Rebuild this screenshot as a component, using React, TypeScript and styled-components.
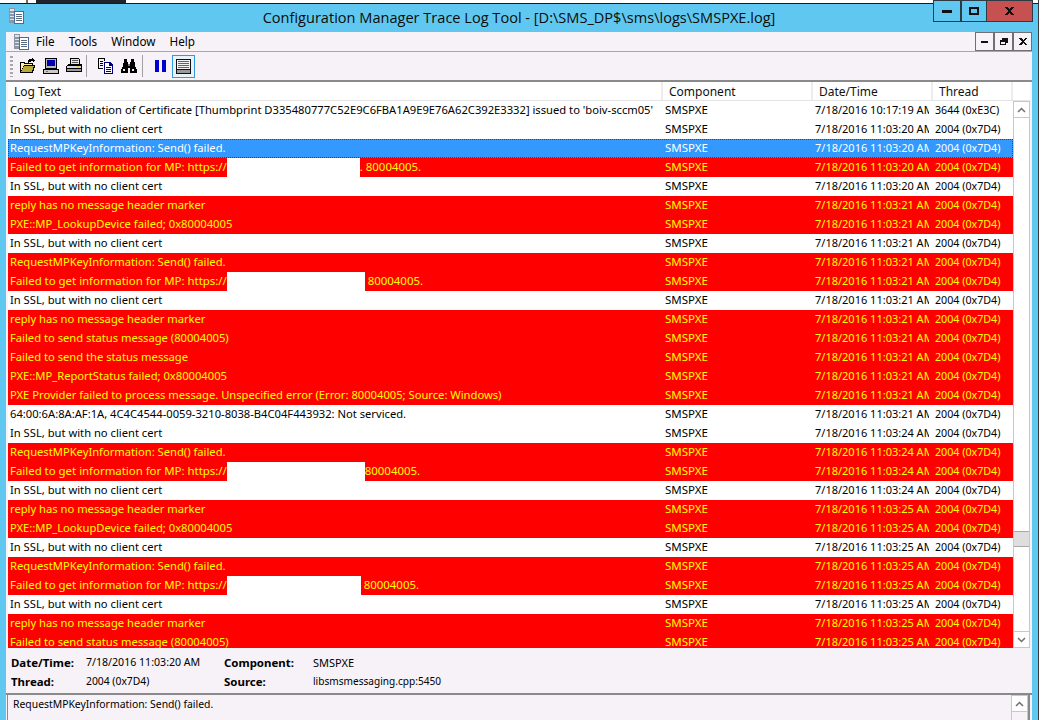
import React from "react";
import styled, { createGlobalStyle } from "styled-components";

const GlobalStyle = createGlobalStyle`
  html, body {
    margin: 0;
    padding: 0;
    background: #ffffff;
    overflow: hidden;
  }
  body {
    font-family: "Noto Sans", "Open Sans", sans-serif;
    font-size: 12px;
    color: #000000;
  }
`;

const BLUE = "#60c8f0";
const PANEL = "#f6f2f7";

const Page = styled.div`
  width: 1042px;
  height: 720px;
  overflow: hidden;
`;

const Frame = styled.div`
  width: 1038px;
  height: 720px;
  background: ${BLUE};
  border-right: 1px solid #3a3a3a;
  display: flex;
  flex-direction: column;
`;

const TitleBar = styled.div`
  position: relative;
  height: 32px;
  flex: none;
  display: grid;
  grid-template-columns: 1fr auto 1fr;
`;

const BehindStrip = styled.svg`
  position: absolute;
  left: 0;
  top: 0;
`;

const TitleLeft = styled.div`
  padding: 8px 0 0 8px;
`;

const TitleText = styled.div`
  padding-top: 6px;
  font-family: "Open Sans", sans-serif;
  font-size: 14.57px;
  line-height: 22px;
  color: #0c0c0c;
`;

const TitleRight = styled.div`
  position: relative;
  display: flex;
  justify-content: flex-end;
  align-items: flex-start;
  padding-right: 5px;
`;

const CaptionButton = styled.div<{ $w: number; $close?: boolean }>`
  width: ${({ $w }) => $w}px;
  height: 22px;
  box-sizing: border-box;
  background: ${({ $close }) => ($close ? "#c75050" : BLUE)};
  border: 1px solid #2c3b44;
  border-left-width: ${({ $close }) => ($close ? 0 : 1)}px;
  display: flex;
  align-items: center;
  justify-content: center;
`;

const Mdi = styled.div`
  flex: 1;
  min-height: 0;
  margin: 0 6px 0 6px;
  background: ${PANEL};
  display: flex;
  flex-direction: column;
`;

const MenuBar = styled.div`
  height: 20px;
  flex: none;
  display: flex;
  align-items: center;
  box-sizing: border-box;
  padding-left: 7px;
  border-bottom: 1px solid #a8a8a8;
`;

const MenuItems = styled.div`
  display: flex;
  gap: 14px;
  margin-left: 7px;
  font-size: 11.7px;
  line-height: 18px;
  padding-bottom: 1px;
  flex: 1;
`;

const MdiButtons = styled.div`
  display: flex;
  align-self: flex-start;
`;

const MdiButton = styled.div`
  width: 19px;
  height: 19px;
  box-sizing: border-box;
  border: 1px solid #707070;
  display: flex;
  align-items: center;
  justify-content: center;
`;

const Toolbar = styled.div`
  height: 30px;
  flex: none;
  box-sizing: border-box;
  border-bottom: 2px solid #8a8a8a;
  display: flex;
  align-items: center;
  padding-left: 4px;
`;

const Gripper = styled.div`
  width: 3px;
  height: 21px;
  margin-right: 3px;
  background: repeating-linear-gradient(to bottom, #a8a8a8 0 2px, transparent 2px 4px);
`;

const ToolButton = styled.div<{ $on?: boolean }>`
  width: 23px;
  height: 23px;
  box-sizing: border-box;
  display: flex;
  align-items: center;
  justify-content: center;
  border: ${({ $on }) => ($on ? "1px solid #3399dd" : "none")};
  background: ${({ $on }) => ($on ? "#e8f2fa" : "transparent")};
`;

const ToolSeparator = styled.div<{ $left: number; $right: number }>`
  width: 1px;
  height: 22px;
  margin: 0 ${({ $right }) => $right}px 0 ${({ $left }) => $left}px;
  background: #a0a0a0;
`;

const ListArea = styled.div`
  position: relative;
  height: 566px;
  flex: none;
  margin-left: 2px;
  margin-right: 2px;
  background: #ffffff;
  display: flex;
  overflow: hidden;
`;

const ListMain = styled.div`
  width: 1005px;
  flex: none;
  display: flex;
  flex-direction: column;
`;

const columns = "655px 150px 120px 80px";

const HeaderRow = styled.div`
  height: 19px;
  flex: none;
  width: 1022px;
  display: grid;
  grid-template-columns: ${columns} 1fr;
  border-bottom: 1px solid #e4e4e4;
  box-sizing: border-box;
`;

const HeaderCell = styled.div`
  padding: 1px 0 0 6px;
  line-height: 17px;
  border-right: 2px solid #ececec;
  color: #111111;
`;

const Row = styled.div<{ $kind: RowKind }>`
  height: 19px;
  flex: none;
  box-sizing: border-box;
  display: grid;
  grid-template-columns: ${columns};
  line-height: 18px;
  white-space: nowrap;
  background: ${({ $kind }) =>
    $kind === "error" ? "#ff0000" : $kind === "selected" ? "#3399ff" : "#ffffff"};
  color: ${({ $kind }) =>
    $kind === "error" ? "#ffff00" : $kind === "selected" ? "#ffffff" : "#000000"};
  outline: ${({ $kind }) => ($kind === "selected" ? "1px dotted #5a3a10" : "none")};
  outline-offset: -1px;
`;

const Cell = styled.div<{ $size: number }>`
  padding-left: 2px;
  margin-right: 4px;
  overflow: hidden;
  font-size: ${({ $size }) => $size}px;
`;

const FailedText = styled.span`
  font-size: 11.42px;
`;

const Redaction = styled.span<{ $w: number }>`
  display: inline-block;
  width: ${({ $w }) => $w}px;
  height: 19px;
  vertical-align: top;
  background: #ffffff;
`;

const Scrollbar = styled.div`
  width: 17px;
  flex: none;
  box-sizing: border-box;
  margin-top: 19px;
  border-left: 1px solid #c8c8c8;
  border-right: 1px solid #c8c8c8;
  display: flex;
  flex-direction: column;
  background: #ffffff;
`;

const ScrollArrow = styled.div`
  height: 17px;
  flex: none;
  box-sizing: border-box;
  display: flex;
  align-items: center;
  justify-content: center;
  background: #ffffff;
  border-top: 1px solid #c8c8c8;
  border-bottom: 1px solid #c8c8c8;
`;

const ScrollTrack = styled.div<{ $flex: number }>`
  flex: ${({ $flex }) => $flex};
`;

const ScrollThumb = styled.div`
  height: 16px;
  flex: none;
  box-sizing: border-box;
  background: #dedede;
  border-top: 1px solid #a8a8a8;
  border-bottom: 1px solid #a8a8a8;
`;

const Details = styled.div`
  height: 47px;
  flex: none;
  box-sizing: border-box;
  padding: 5px 0 0 5px;
  display: grid;
  grid-template-columns: 75px 138px 89px 1fr;
  grid-auto-rows: 19px;
  line-height: 19px;
  align-items: center;
  border-bottom: 2px solid #8a8a8a;
`;

const DetailLabel = styled.div`
  font-weight: 700;
  font-size: 11.45px;
`;

const DetailValue = styled.div<{ $size: number }>`
  font-size: ${({ $size }) => $size}px;
`;

const MessageBox = styled.div`
  flex: 1;
  min-height: 0;
  margin: 0 2px 0 1px;
  box-sizing: border-box;
  border-left: 1px solid #8a8a8a;
  border-right: 2px solid #8a8a8a;
  display: flex;
`;

const MessageText = styled.div`
  flex: 1;
  padding: 0 0 0 5px;
  line-height: 18px;
  font-size: 10.4px;
`;

const MessageScroll = styled.div`
  width: 17px;
  flex: none;
  box-sizing: border-box;
  border-left: 1px solid #c8c8c8;
  border-right: 1px solid #c8c8c8;
`;

type RowKind = "normal" | "error" | "selected";

type LogRow = {
  text: React.ReactNode;
  kind: RowKind;
  sec: string;
  thread?: string;
};

const Shot = ({ d, fill }: { d: string; fill: string }) => <path d={d} fill={fill} />;

const Crisp = styled.svg`
  display: block;
  shape-rendering: crispEdges;
`;

const LogIcon = ({ size }: { size: number }) => (
  <Crisp width={size} height={size} viewBox="0 0 16 16">
    <Shot d="M1 0h6v15H1z" fill="#8a96a6" />
    <Shot d="M2 1h4v2H2zM2 5h4v1H2zM2 8h4v1H2zM2 11h4v1H2z" fill="#dfe5ec" />
    <Shot d="M6 3h10v13H6z" fill="#4a6a9a" />
    <Shot d="M7 4h8v11H7z" fill="#ffffff" />
    <Shot d="M8 6h6v1H8zM8 8h6v1H8zM8 10h6v1H8zM8 12h6v1H8z" fill="#5a6a80" />
  </Crisp>
);

const FolderIcon = () => (
  <Crisp width={16} height={16} viewBox="0 0 16 16">
    <Shot d="M0 4h5v1h8v2h2v1l-2 7H0z" fill="#000000" />
    <Shot d="M1 5h3v1h8v1H4l-3 6z" fill="#fff29a" />
    <Shot d="M4 8h10l-2 6H1z" fill="#b8a838" />
    <Shot d="M8 2h1V1h3V0h1v1h1v1h1v1h-1v1h-1V3h-2v1H9v1H8z" fill="#000000" />
  </Crisp>
);

const ComputerIcon = () => (
  <Crisp width={16} height={16} viewBox="0 0 16 16">
    <Shot d="M2 0h12v11H2z" fill="#000000" />
    <Shot d="M3 1h10v9H3z" fill="#b8b8b8" />
    <Shot d="M4 2h8v6H4z" fill="#0000b0" />
    <Shot d="M0 11h16v5H0z" fill="#000000" />
    <Shot d="M1 12h14v3H1z" fill="#c8c8c8" />
    <Shot d="M3 13h2v1H3z" fill="#00c000" />
  </Crisp>
);

const PrinterIcon = () => (
  <Crisp width={16} height={16} viewBox="0 0 16 16">
    <Shot d="M4 0h9v1h1v5h2v8H0V8l2-2h2z" fill="#000000" />
    <Shot d="M5 1h8v5H5z" fill="#e4e4e4" />
    <Shot d="M6 2h6v1H6zM6 4h6v1H6z" fill="#555555" />
    <Shot d="M1 8h14v2H1z" fill="#d8d8d8" />
    <Shot d="M1 11h14v2H1z" fill="#9a9a9a" />
    <Shot d="M11 8h2v1h-2z" fill="#d8c020" />
  </Crisp>
);

const CopyIcon = () => (
  <Crisp width={16} height={16} viewBox="0 0 16 16">
    <Shot d="M0 0h7v3h-1V1H1v9h4v1H0z" fill="#000000" />
    <Shot d="M2 3h3v1H2zM2 5h3v1H2zM2 7h3v1H2z" fill="#000000" />
    <Shot d="M6 4h6l3 3v9H6z" fill="#000080" />
    <Shot d="M7 5h4v3h3v7H7z" fill="#ffffff" />
    <Shot d="M8 9h5v1H8zM8 11h5v1H8zM8 13h5v1H8z" fill="#000080" />
  </Crisp>
);

const BinocularsIcon = () => (
  <Crisp width={16} height={16} viewBox="0 0 16 16">
    <Shot d="M3 1h3v3h1v2h2V4h1V1h3v3l1 1v3l2 4v3H9v-5H7v5H0v-3l2-4V5l1-1z" fill="#000000" />
    <Shot d="M2 11h2v2H2zM11 11h2v2h-2z" fill="#e8e8e8" />
    <Shot d="M7 6h2v2H7z" fill="#777777" />
  </Crisp>
);

const PauseIcon = () => (
  <Crisp width={11} height={12} viewBox="0 0 11 12">
    <Shot d="M0 0h4v12H0zM7 0h4v12H7z" fill="#0000d0" />
  </Crisp>
);

const DetailIcon = () => (
  <Crisp width={15} height={15} viewBox="0 0 15 15">
    <Shot d="M0 0h15v15H0z" fill="#111111" />
    <Shot d="M1 1h13v9H1z" fill="#f4f4f4" />
    <Shot d="M2 2h11v1H2zM2 4h11v1H2zM2 6h11v1H2zM2 8h11v1H2z" fill="#666666" />
    <Shot d="M1 11h13v3H1z" fill="#9a9a9a" />
  </Crisp>
);

const CaptionGlyph = ({ d, color, w, h }: { d: string; color: string; w: number; h: number }) => (
  <Crisp width={w} height={h} viewBox={`0 0 ${w} ${h}`}>
    <path d={d} fill={color} />
  </Crisp>
);

const ChevronSvg = styled.svg`
  display: block;
`;

const Chevron = ({ up }: { up: boolean }) => (
  <ChevronSvg width={9} height={6} viewBox="0 0 9 6">
    <path
      d={up ? "M1 5l3.5-3.5L8 5" : "M1 1l3.5 3.5L8 1"}
      fill="none"
      stroke="#707070"
      strokeWidth={1.5}
    />
  </ChevronSvg>
);

const inSsl = "In SSL, but with no client cert";
const request = "RequestMPKeyInformation: Send() failed.";
const reply = "reply has no message header marker";
const lookup = "PXE::MP_LookupDevice failed; 0x80004005";
const sendStatus = "Failed to send status message (80004005)";

const failedMp = (w: number, tail: string) => (
  <FailedText>
    Failed to get information for MP: https://
    <Redaction $w={w} />
    {tail}
  </FailedText>
);

const rows: LogRow[] = [
  {
    text: "Completed validation of Certificate [Thumbprint D335480777C52E9C6FBA1A9E9E76A62C392E3332] issued to 'boiv-sccm05'",
    kind: "normal",
    sec: "10:17:19",
    thread: "3644 (0xE3C)",
  },
  { text: inSsl, kind: "normal", sec: "11:03:20" },
  { text: request, kind: "selected", sec: "11:03:20" },
  { text: failedMp(133, ". 80004005."), kind: "error", sec: "11:03:20" },
  { text: inSsl, kind: "normal", sec: "11:03:20" },
  { text: reply, kind: "error", sec: "11:03:21" },
  { text: lookup, kind: "error", sec: "11:03:21" },
  { text: inSsl, kind: "normal", sec: "11:03:21" },
  { text: request, kind: "error", sec: "11:03:21" },
  { text: failedMp(138, " 80004005."), kind: "error", sec: "11:03:21" },
  { text: inSsl, kind: "normal", sec: "11:03:21" },
  { text: reply, kind: "error", sec: "11:03:21" },
  { text: sendStatus, kind: "error", sec: "11:03:21" },
  { text: "Failed to send the status message", kind: "error", sec: "11:03:21" },
  { text: "PXE::MP_ReportStatus failed; 0x80004005", kind: "error", sec: "11:03:21" },
  {
    text: "PXE Provider failed to process message. Unspecified error (Error: 80004005; Source: Windows)",
    kind: "error",
    sec: "11:03:21",
  },
  {
    text: "64:00:6A:8A:AF:1A, 4C4C4544-0059-3210-8038-B4C04F443932: Not serviced.",
    kind: "normal",
    sec: "11:03:21",
  },
  { text: inSsl, kind: "normal", sec: "11:03:24" },
  { text: request, kind: "error", sec: "11:03:24" },
  { text: failedMp(138, "80004005."), kind: "error", sec: "11:03:24" },
  { text: inSsl, kind: "normal", sec: "11:03:24" },
  { text: reply, kind: "error", sec: "11:03:25" },
  { text: lookup, kind: "error", sec: "11:03:25" },
  { text: inSsl, kind: "normal", sec: "11:03:25" },
  { text: request, kind: "error", sec: "11:03:25" },
  { text: failedMp(134, " 80004005."), kind: "error", sec: "11:03:25" },
  { text: inSsl, kind: "normal", sec: "11:03:25" },
  { text: reply, kind: "error", sec: "11:03:25" },
  { text: sendStatus, kind: "error", sec: "11:03:25" },
];

const App = () => {
  return (
    <Page>
      <GlobalStyle />
      <Frame>
        <TitleBar>
          <BehindStrip width={1038} height={4} viewBox="0 0 1038 4">
            <rect width={1038} height={4} fill="#ffffff" />
            <rect y={3} width={1038} height={1} fill="#1a1a1a" />
            <rect x={36} width={90} height={3} fill="#20242c" />
            <rect x={26} width={2} height={3} fill="#7a6a50" />
            <rect x={980} width={40} height={3} fill="#8a6a30" />
          </BehindStrip>
          <TitleLeft>
            <LogIcon size={16} />
          </TitleLeft>
          <TitleText>Configuration Manager Trace Log Tool - [D:\SMS_DP$\sms\logs\SMSPXE.log]</TitleText>
          <TitleRight>
            <CaptionButton $w={28}>
              <CaptionGlyph w={10} h={3} d="M0 0h10v3H0z" color="#111111" />
            </CaptionButton>
            <CaptionButton $w={26}>
              <CaptionGlyph w={10} h={8} d="M0 0h10v8H0zM2 2v4h6V2z" color="#111111" />
            </CaptionButton>
            <CaptionButton $w={46} $close>
              <CaptionGlyph
                w={9}
                h={8}
                d="M0 0h2.5L4.5 2.5 6.5 0H9L6 4l3 4H6.500L4.500 5.500 2.500 8H0l3-4z"
                color="#111111"
              />
            </CaptionButton>
          </TitleRight>
        </TitleBar>
        <Mdi>
          <MenuBar>
            <LogIcon size={16} />
            <MenuItems>
              <span>File</span>
              <span>Tools</span>
              <span>Window</span>
              <span>Help</span>
            </MenuItems>
            <MdiButtons>
              <MdiButton>
                <CaptionGlyph w={7} h={2} d="M0 0h7v2H0z" color="#111111" />
              </MdiButton>
              <MdiButton>
                <CaptionGlyph
                  w={8}
                  h={7}
                  d="M2 0h6v5H6V2H2zM0 2h6v5H0zM1 4v2h4V4z"
                  color="#111111"
                />
              </MdiButton>
              <MdiButton>
                <CaptionGlyph
                  w={8}
                  h={7}
                  d="M0 0h2l2 2 2-2h2L5 3.500 8 7H6L4 5 2 7H0l3-3.500z"
                  color="#111111"
                />
              </MdiButton>
            </MdiButtons>
          </MenuBar>
          <Toolbar>
            <Gripper />
            <ToolButton>
              <FolderIcon />
            </ToolButton>
            <ToolButton>
              <ComputerIcon />
            </ToolButton>
            <ToolButton>
              <PrinterIcon />
            </ToolButton>
            <ToolSeparator $left={1} $right={7} />
            <ToolButton>
              <CopyIcon />
            </ToolButton>
            <ToolButton>
              <BinocularsIcon />
            </ToolButton>
            <ToolSeparator $left={2} $right={6} />
            <ToolButton>
              <PauseIcon />
            </ToolButton>
            <ToolButton $on>
              <DetailIcon />
            </ToolButton>
          </Toolbar>
          <ListArea>
            <ListMain>
              <HeaderRow>
                <HeaderCell>Log Text</HeaderCell>
                <HeaderCell>Component</HeaderCell>
                <HeaderCell>Date/Time</HeaderCell>
                <HeaderCell>Thread</HeaderCell>
              </HeaderRow>
              {rows.map((row, i) => (
                <Row key={i} $kind={row.kind}>
                  <Cell $size={11.2}>{row.text}</Cell>
                  <Cell $size={11.5}>SMSPXE</Cell>
                  <Cell $size={11}>7/18/2016 {row.sec} AM</Cell>
                  <Cell $size={10.7}>{row.thread ?? "2004 (0x7D4)"}</Cell>
                </Row>
              ))}
            </ListMain>
            <Scrollbar>
              <ScrollArrow>
                <Chevron up />
              </ScrollArrow>
              <ScrollTrack $flex={414} />
              <ScrollThumb />
              <ScrollTrack $flex={84} />
              <ScrollArrow>
                <Chevron up={false} />
              </ScrollArrow>
            </Scrollbar>
          </ListArea>
          <Details>
            <DetailLabel>Date/Time:</DetailLabel>
            <DetailValue $size={10.6}>7/18/2016 11:03:20 AM</DetailValue>
            <DetailLabel>Component:</DetailLabel>
            <DetailValue $size={11}>SMSPXE</DetailValue>
            <DetailLabel>Thread:</DetailLabel>
            <DetailValue $size={10.35}>2004 (0x7D4)</DetailValue>
            <DetailLabel>Source:</DetailLabel>
            <DetailValue $size={10.1}>libsmsmessaging.cpp:5450</DetailValue>
          </Details>
          <MessageBox>
            <MessageText>RequestMPKeyInformation: Send() failed.</MessageText>
            <MessageScroll>
              <ScrollArrow>
                <Chevron up />
              </ScrollArrow>
            </MessageScroll>
          </MessageBox>
        </Mdi>
      </Frame>
    </Page>
  );
};

export default App;
